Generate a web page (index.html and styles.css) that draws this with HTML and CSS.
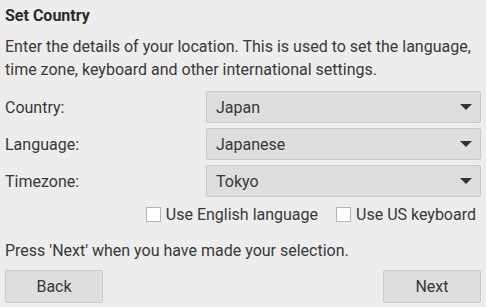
FILE: index.html
```html
<!DOCTYPE html>
<html lang="en">
<head>
    <meta charset="UTF-8">
    <meta name="viewport" content="width=device-width, initial-scale=1.0">
    <title>Set Country</title>
    <link rel="stylesheet" href="styles.css">
</head>
<body>
    <div class="dialog">
        <h1>Set Country</h1>
        <p class="intro">Enter the details of your location. This is used to set the language, time zone, keyboard and other international settings.</p>

        <div class="fields">
            <label>Country:</label>
            <div class="combo"><span>Japan</span><i class="arrow"></i></div>
            <label>Language:</label>
            <div class="combo"><span>Japanese</span><i class="arrow"></i></div>
            <label>Timezone:</label>
            <div class="combo"><span>Tokyo</span><i class="arrow"></i></div>
        </div>

        <div class="checks">
            <label class="check"><span class="box"></span>Use English language</label>
            <label class="check"><span class="box"></span>Use US keyboard</label>
        </div>

        <p class="hint">Press 'Next' when you have made your selection.</p>

        <div class="buttons">
            <button>Back</button>
            <button>Next</button>
        </div>
    </div>
</body>
</html>
```

FILE: styles.css
```css
body {
    margin: 0;
    background: #ededed;
    font-family: Roboto, "Liberation Sans", sans-serif;
    font-size: 16px;
    color: #383838;
}
.dialog {
    padding: 5px 5px 0 5px;
    display: flex;
    flex-direction: column;
}
h1 {
    font-size: 16px;
    font-weight: bold;
    margin: 1px 0 0 0;
    line-height: 20px;
    color: #2a2a2a;
}
.intro {
    line-height: 23px;
    margin: 9px 0 0 0;
}
.fields {
    display: grid;
    grid-template-columns: 201px 1fr;
    grid-auto-rows: 32px;
    row-gap: 5px;
    margin-top: 10px;
}
.fields label {
    display: flex;
    align-items: center;
}
.combo {
    display: flex;
    align-items: center;
    justify-content: space-between;
    background: #dedede;
    border: 1px solid #c9c9c9;
    border-radius: 2px;
    padding: 0 8px 0 9px;
}
.arrow {
    width: 0;
    height: 0;
    border-left: 6.5px solid transparent;
    border-right: 6.5px solid transparent;
    border-top: 6px solid #333;
}
.checks {
    display: flex;
    justify-content: flex-end;
    gap: 18px;
    height: 19px;
    margin-top: 8px;
    padding-right: 5px;
}
.check {
    display: flex;
    align-items: center;
    gap: 5px;
}
.box {
    width: 13px;
    height: 13px;
    background: #fff;
    border: 1px solid #b4b4b4;
}
.hint {
    line-height: 20px;
    margin: 17px 0 0 0;
}
.buttons {
    display: flex;
    justify-content: space-between;
    margin-top: 9px;
}
button {
    width: 98px;
    height: 33px;
    font-family: Roboto, "Liberation Sans", sans-serif;
    font-size: 16px;
    color: #383838;
    background: #dedede;
    border: 1px solid #c9c9c9;
    border-radius: 2px;
}
```
